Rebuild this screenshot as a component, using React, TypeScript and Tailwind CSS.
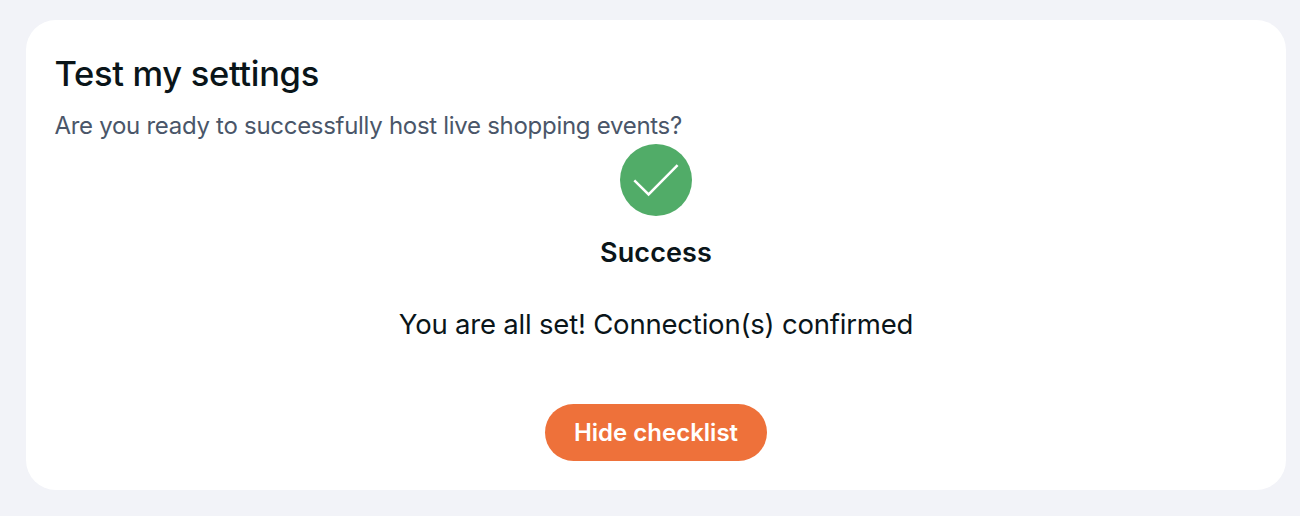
const CheckCircle = () => {
    return (
        <svg width="72" height="72" viewBox="0 0 72 72" fill="none" aria-hidden="true">
            <circle cx="36" cy="36" r="36" fill="#51ac68" />
            <path d="M14.3 36.3L28.6 50.4L57.6 21.2" stroke="#ffffff" strokeWidth="2.5" />
        </svg>
    );
};

export default function App() {
    return (
        <div className="h-[516px] bg-[#f2f3f8] pt-5 pr-3.5 pl-[26px] font-['Inter','Liberation_Sans',sans-serif] text-[#0a1519]">
            <section className="flex h-[470px] flex-col rounded-[30px] bg-white px-[28.5px] pt-8">
                <h1 className="text-[34.5px] leading-[44px] font-medium tracking-[-0.32px] whitespace-nowrap">Test my settings</h1>
                <p className="mt-3 text-[24px] leading-9 tracking-[-0.29px] whitespace-nowrap text-[#4a5669]">
                    Are you ready to successfully host live shopping events?
                </p>

                <div className="flex flex-col items-center">
                    <CheckCircle />
                    <h2 className="mt-[17px] text-[27px] leading-10 font-semibold tracking-[0.1px]">Success</h2>
                    <p className="mt-[31px] text-[27.5px] leading-10 tracking-[-0.2px]">You are all set! Connection(s) confirmed</p>
                    <button
                        type="button"
                        className="mt-[60px] h-[57px] w-[222px] rounded-full bg-[#ee713a] text-[24px] leading-9 font-semibold text-white"
                    >
                        Hide checklist
                    </button>
                </div>
            </section>
        </div>
    );
}
